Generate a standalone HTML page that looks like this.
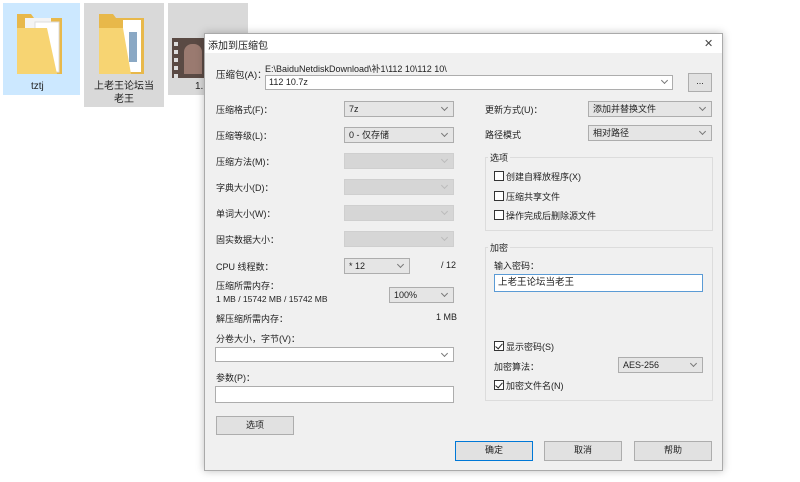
<!DOCTYPE html>
<html><head><meta charset="utf-8"><style>
body{margin:0;width:800px;height:482px;background:#fff;position:relative;overflow:hidden;font-family:"Liberation Sans","Noto Sans CJK SC",sans-serif;font-size:9px;color:#222}
.a{position:absolute;white-space:nowrap}
.cb{position:absolute;background:#e5e5e5;border:1px solid #adadad;box-sizing:border-box;padding-left:4px;line-height:14px;font-size:9px}
.cb.d{background:#d6d6d6;border-color:#cfcfcf}
.cb:after{content:"";position:absolute;right:6px;top:3px;width:4px;height:4px;border-right:1px solid #777;border-bottom:1px solid #777;transform:rotate(45deg)}
.cb.d:after{border-color:#bbb}
.in{position:absolute;background:#fff;border:1px solid #7a7a7a;box-sizing:border-box}
.btn{position:absolute;background:#e1e1e1;border:1px solid #adadad;box-sizing:border-box;text-align:center;line-height:17px}
.grp{position:absolute;border:1px solid #dcdcdc;box-sizing:border-box}
.chk{position:absolute;width:10px;height:10px;border:1px solid #333;background:#fff;box-sizing:border-box}
.chk.on:after{content:"";position:absolute;left:2px;top:0px;width:3px;height:6px;border-right:1px solid #222;border-bottom:1px solid #222;transform:rotate(40deg)}
</style></head><body>
<div class="a" style="left:3px;top:3px;width:77px;height:92px;background:#cce8ff"></div>
<div class="a" style="left:84px;top:3px;width:80px;height:104px;background:#d9d9d9"></div>
<div class="a" style="left:168px;top:3px;width:80px;height:92px;background:#d9d9d9"></div>
<svg class="a" style="left:15px;top:12px" width="50" height="64"><path d="M2 2h14l3 4h28v56H2z" fill="#e8b84a"/><rect x="10" y="6" width="26" height="50" fill="#f4f4f4"/><rect x="20" y="10" width="24" height="50" fill="#fff" stroke="#ddd"/><path d="M2 16h30l10 46H2z" fill="#f7d472"/></svg>
<svg class="a" style="left:97px;top:12px" width="50" height="64"><path d="M2 2h14l3 4h28v56H2z" fill="#e8b84a"/><rect x="26" y="8" width="18" height="52" fill="#fff"/><rect x="32" y="20" width="8" height="30" fill="#8aa8c4"/><path d="M2 16h24l8 46H2z" fill="#f7d472"/></svg>
<div class="a" style="left:172px;top:38px;width:34px;height:40px;background:#5a4a44"></div>
<div class="a" style="left:174px;top:42px;width:4px;height:4px;background:#ddd;box-shadow:0 8px #ddd,0 16px #ddd,0 24px #ddd,0 32px #ddd"></div>
<div class="a" style="left:184px;top:44px;width:18px;height:30px;background:#9a7a70;border-radius:8px 8px 0 0"></div>
<div class="a" style="left:31px;top:81px;font-size:10px">tztj</div>
<div class="a" style="left:92px;top:80px;font-size:10px;line-height:13px;text-align:center;width:64px;white-space:normal;word-break:break-all">上老王论坛当老王</div>
<div class="a" style="left:195px;top:81px;font-size:10px">1.</div>
<div class="a" style="left:204px;top:33px;width:519px;height:438px;background:#f0f0f0;box-shadow:0 0 8px rgba(0,0,0,.25);border:1px solid #aaa;box-sizing:border-box"></div>
<div class="a" style="left:205px;top:34px;width:517px;height:19px;background:#fff"></div>
<div class="a" style="left:208px;top:37px;font-size:10px">添加到压缩包</div>
<div class="a" style="left:704px;top:37px;font-size:11px;color:#444">✕</div>

<div class="a" style="left:216px;top:67px;font-size:9.5px">压缩包(A)：</div>
<div class="a" style="left:265px;top:62px">E:\BaiduNetdiskDownload\补1\112 10\112 10\</div>
<div class="in" style="left:265px;top:75px;width:408px;height:15px;border-color:#adadad;padding-left:3px;line-height:13px">112 10.7z</div>
<div class="a" style="left:662px;top:78px;width:4px;height:4px;border-right:1px solid #777;border-bottom:1px solid #777;transform:rotate(45deg)"></div>
<div class="btn" style="left:688px;top:73px;width:24px;height:19px;line-height:15px">...</div>

<div class="a" style="left:216px;top:103px">压缩格式(F)：</div><div class="cb" style="left:344px;top:101px;width:110px;height:16px">7z</div>
<div class="a" style="left:216px;top:129px">压缩等级(L)：</div><div class="cb" style="left:344px;top:127px;width:110px;height:16px">0 - 仅存储</div>
<div class="a" style="left:216px;top:155px">压缩方法(M)：</div><div class="cb d" style="left:344px;top:153px;width:110px;height:16px"></div>
<div class="a" style="left:216px;top:181px">字典大小(D)：</div><div class="cb d" style="left:344px;top:179px;width:110px;height:16px"></div>
<div class="a" style="left:216px;top:207px">单词大小(W)：</div><div class="cb d" style="left:344px;top:205px;width:110px;height:16px"></div>
<div class="a" style="left:216px;top:233px">固实数据大小：</div><div class="cb d" style="left:344px;top:231px;width:110px;height:16px"></div>
<div class="a" style="left:216px;top:260px">CPU 线程数：</div><div class="cb" style="left:344px;top:258px;width:66px;height:16px">* 12</div>
<div class="a" style="left:441px;top:260px">/ 12</div>
<div class="a" style="left:216px;top:279px">压缩所需内存：</div>
<div class="a" style="left:216px;top:294px;font-size:8.5px">1 MB / 15742 MB / 15742 MB</div>
<div class="cb" style="left:389px;top:287px;width:65px;height:16px">100%</div>
<div class="a" style="left:216px;top:312px">解压缩所需内存：</div>
<div class="a" style="left:436px;top:312px">1 MB</div>
<div class="a" style="left:216px;top:332px">分卷大小，字节(V)：</div>
<div class="cb" style="left:215px;top:347px;width:239px;height:15px;background:#fff"></div>
<div class="a" style="left:216px;top:371px">参数(P)：</div>
<div class="in" style="left:215px;top:386px;width:239px;height:17px;border-color:#adadad"></div>
<div class="btn" style="left:216px;top:416px;width:78px;height:19px">选项</div>

<div class="a" style="left:485px;top:103px">更新方式(U)：</div><div class="cb" style="left:588px;top:101px;width:124px;height:16px">添加并替换文件</div>
<div class="a" style="left:485px;top:128px">路径模式</div><div class="cb" style="left:588px;top:125px;width:124px;height:16px">相对路径</div>
<div class="grp" style="left:485px;top:157px;width:228px;height:74px"></div>
<div class="a" style="left:488px;top:151px;background:#f0f0f0;padding:0 2px">选项</div>
<div class="chk" style="left:494px;top:171px"></div><div class="a" style="left:506px;top:170px">创建自释放程序(X)</div>
<div class="chk" style="left:494px;top:191px"></div><div class="a" style="left:506px;top:190px">压缩共享文件</div>
<div class="chk" style="left:494px;top:210px"></div><div class="a" style="left:506px;top:209px">操作完成后删除源文件</div>
<div class="grp" style="left:485px;top:247px;width:228px;height:154px"></div>
<div class="a" style="left:488px;top:241px;background:#f0f0f0;padding:0 2px">加密</div>
<div class="a" style="left:494px;top:259px">输入密码：</div>
<div class="in" style="left:494px;top:274px;width:209px;height:18px;border-color:#5b9bd5;padding-left:3px;line-height:15px;font-size:9.5px">上老王论坛当老王</div>
<div class="chk on" style="left:494px;top:341px"></div><div class="a" style="left:506px;top:340px">显示密码(S)</div>
<div class="a" style="left:494px;top:360px">加密算法：</div><div class="cb" style="left:618px;top:357px;width:85px;height:16px">AES-256</div>
<div class="chk on" style="left:494px;top:380px"></div><div class="a" style="left:506px;top:379px">加密文件名(N)</div>

<div class="btn" style="left:455px;top:441px;width:78px;height:20px;border-color:#0078d7">确定</div>
<div class="btn" style="left:544px;top:441px;width:78px;height:20px">取消</div>
<div class="btn" style="left:634px;top:441px;width:78px;height:20px">帮助</div>
</body></html>
